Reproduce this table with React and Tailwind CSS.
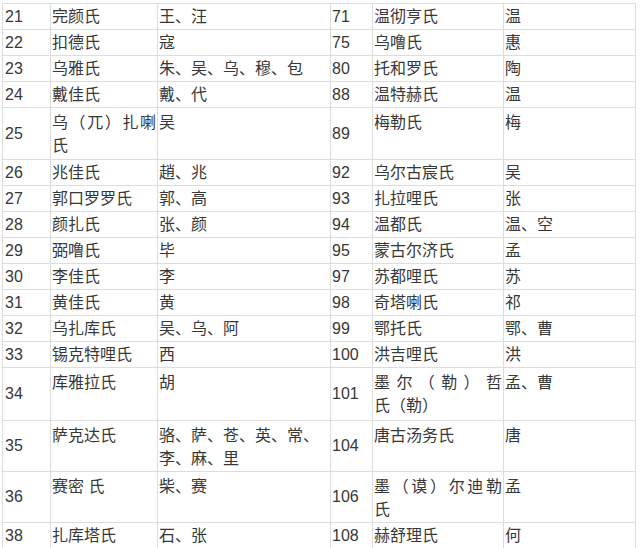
import React from "react";

const font = { fontFamily: '"Liberation Sans", "Noto Sans CJK SC", sans-serif' };

function Just({ chars }) {
  return (
    <div className="flex justify-between">
      {chars.split("").map((c, i) => (
        <span key={i}>{c}</span>
      ))}
    </div>
  );
}

const rows = [
  { h: "h-[26px]", a: ["21", "完颜氏", "王、汪"], b: ["71", "温彻亨氏", "温"] },
  { h: "h-[26px]", a: ["22", "扣德氏", "寇"], b: ["75", "乌噜氏", "惠"] },
  { h: "h-[26px]", a: ["23", "乌雅氏", "朱、吴、乌、穆、包"], b: ["80", "托和罗氏", "陶"] },
  { h: "h-[26px]", a: ["24", "戴佳氏", "戴、代"], b: ["88", "温特赫氏", "温"] },
  {
    h: "h-[52px]",
    tall: true,
    a: ["25", <><Just chars="乌（兀）扎喇" /><div>氏</div></>, "吴"],
    b: ["89", "梅勒氏", "梅"],
  },
  { h: "h-[26px]", a: ["26", "兆佳氏", "趙、兆"], b: ["92", "乌尔古宸氏", "吴"] },
  { h: "h-[26px]", a: ["27", "郭口罗罗氏", "郭、高"], b: ["93", "扎拉哩氏", "张"] },
  { h: "h-[26px]", a: ["28", "颜扎氏", "张、颜"], b: ["94", "温都氏", "温、空"] },
  { h: "h-[26px]", a: ["29", "弼噜氏", "毕"], b: ["95", "蒙古尔济氏", "孟"] },
  { h: "h-[26px]", a: ["30", "李佳氏", "李"], b: ["97", "苏都哩氏", "苏"] },
  { h: "h-[26px]", a: ["31", "黄佳氏", "黄"], b: ["98", "奇塔喇氏", "祁"] },
  { h: "h-[26px]", a: ["32", "乌扎库氏", "吴、乌、阿"], b: ["99", "鄂托氏", "鄂、曹"] },
  { h: "h-[26px]", a: ["33", "锡克特哩氏", "西"], b: ["100", "洪吉哩氏", "洪"] },
  {
    h: "h-[53px]",
    tall: true,
    a: ["34", "库雅拉氏", "胡"],
    b: ["101", <><Just chars="墨尔（勒）哲" /><div>氏（勒）</div></>, "孟、曹"],
  },
  {
    h: "h-[51px]",
    tall: true,
    a: ["35", "萨克达氏", <><div>骆、萨、苍、英、常、</div><div>李、麻、里</div></>],
    b: ["104", "唐古汤务氏", "唐"],
  },
  {
    h: "h-[51px]",
    tall: true,
    a: ["36", "赛密 氏", "柴、赛"],
    b: ["106", <><Just chars="墨（谟）尔迪勒" /><div>氏</div></>, "孟"],
  },
  { h: "h-[26px]", a: ["38", "扎库塔氏", "石、张"], b: ["108", "赫舒理氏", "何"] },
];

export default function App() {
  return (
    <div lang="zh-CN" className="w-[640px] h-[548px] overflow-hidden bg-white text-[16px] text-[#383838]" style={font}>
      <div className="ml-[2px] mt-[3px] w-[634px] border-t border-l border-[#dddddd]">
        {rows.map((r, i) => {
          const txt = r.tall
            ? "px-[1px] pt-[3px] leading-[23px] border-r border-[#dddddd]"
            : "px-[1px] leading-[25px] border-r border-[#dddddd]";
          return (
            <div
              key={i}
              className={`grid grid-cols-[48px_107px_173px_42px_131px_132px] border-b border-[#dddddd] ${r.h}`}
            >
              <div className="pl-[2px] flex items-center border-r border-[#dddddd]">{r.a[0]}</div>
              <div className={txt}>{r.a[1]}</div>
              <div className={txt}>{r.a[2]}</div>
              <div className="pl-[1px] flex items-center border-r border-[#dddddd]">{r.b[0]}</div>
              <div className={txt}>{r.b[1]}</div>
              <div className={txt}>{r.b[2]}</div>
            </div>
          );
        })}
      </div>
    </div>
  );
}
